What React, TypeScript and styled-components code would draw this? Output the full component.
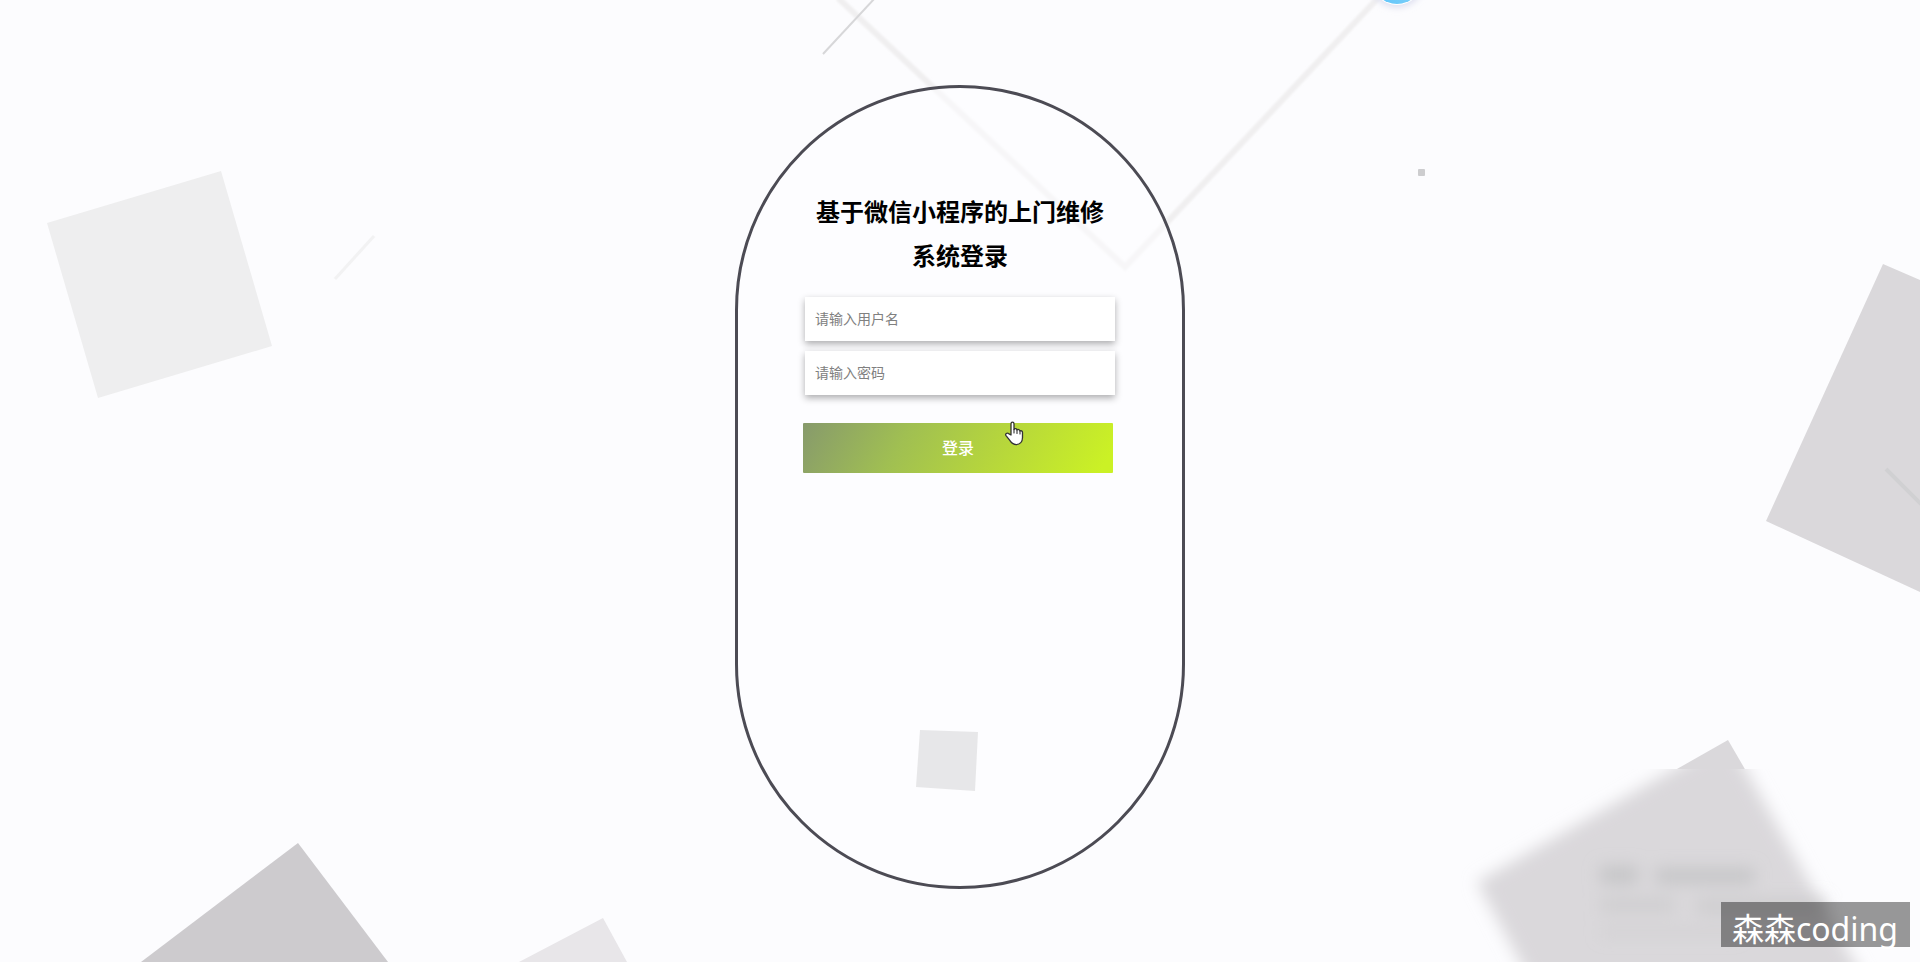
import React, { useState } from "react";
import styled, { createGlobalStyle } from "styled-components";

const GlobalStyle = createGlobalStyle`
  *, *::before, *::after { box-sizing: border-box; }
  body {
    margin: 0;
    background: #fcfcfe;
    color: #000;
    font-family: "Noto Sans CJK SC", sans-serif;
  }
`;

const Page = styled.div`
  position: relative;
  display: flex;
  justify-content: center;
  align-items: flex-start;
  min-height: 100vh;
  padding: 85px 20px 73px;
  overflow: hidden;
`;

const Backdrop = styled.svg`
  position: absolute;
  inset: 0;
  width: 100%;
  height: 100%;
`;

const Card = styled.main`
  position: relative;
  display: flex;
  flex-direction: column;
  align-items: center;
  width: 100%;
  max-width: 450px;
  min-height: 804px;
  padding: 101px 20px 40px;
  border: 3px solid #4c4b54;
  border-radius: 225px;
  background: rgba(253, 253, 255, 0.5);
`;

const Title = styled.h1`
  width: 100%;
  max-width: 300px;
  margin: 0 0 20px;
  font-size: 24px;
  font-weight: 700;
  line-height: 44px;
  text-align: center;
`;

const Form = styled.form`
  display: flex;
  flex-direction: column;
  width: 100%;
  max-width: 314px;
`;

const Fields = styled.div`
  display: flex;
  flex-direction: column;
  gap: 10px;
  padding: 0 2px 28px;
`;

const Field = styled.input`
  width: 100%;
  height: 44px;
  padding: 0 10px 2px;
  border: 0;
  border-radius: 0;
  outline: 0;
  background: #fff;
  box-shadow: 0 3px 7px rgba(0, 0, 0, 0.32);
  color: #333;
  font-family: inherit;
  font-size: 14px;

  &::placeholder {
    color: #808080;
    opacity: 1;
  }
`;

const SubmitArea = styled.div`
  position: relative;
  padding-right: 4px;
`;

const SubmitButton = styled.button`
  display: block;
  width: 100%;
  height: 50px;
  padding: 0 0 3px;
  border: 0;
  border-radius: 1px;
  background: linear-gradient(120deg, #879a6c 0%, #a0bf52 32%, #b6d63c 62%, #cbf125 96%);
  color: #fff;
  font-family: inherit;
  font-size: 16px;
  font-weight: 500;
  cursor: pointer;
`;

const Pointer = styled.svg`
  position: absolute;
  top: -2px;
  left: 201px;
  width: 20px;
  height: 25px;
  pointer-events: none;
`;

const Watermark = styled.div`
  position: absolute;
  right: 10px;
  bottom: 15px;
  height: 45px;
  padding: 0 12px 0 11px;
  background: rgba(0, 0, 0, 0.4);
  color: #fff;
  font-family: "Noto Sans", "Noto Sans CJK SC", sans-serif;
  font-size: 32px;
  line-height: 54px;
  white-space: nowrap;
`;

function Shapes() {
  return (
    <Backdrop viewBox="0 0 1920 962" preserveAspectRatio="xMidYMid slice" aria-hidden="true">
      <defs>
        <clipPath id="sharpArea">
          <rect x="1400" y="700" width="520" height="69" />
        </clipPath>
        <clipPath id="softArea">
          <rect x="1440" y="769" width="480" height="193" />
        </clipPath>
        <filter id="soft" x="-20%" y="-20%" width="140%" height="140%">
          <feGaussianBlur stdDeviation="8" />
        </filter>
        <filter id="smudge" x="-20%" y="-100%" width="140%" height="300%">
          <feGaussianBlur stdDeviation="8" />
        </filter>
        <filter id="edge" x="-5%" y="-5%" width="110%" height="110%">
          <feGaussianBlur stdDeviation="1" />
        </filter>
        <filter id="halo" x="-20%" y="-20%" width="140%" height="140%">
          <feGaussianBlur stdDeviation="3" />
        </filter>
        <linearGradient id="orb" x1="0" x2="1">
          <stop offset="0" stopColor="#5cc4fb" />
          <stop offset="1" stopColor="#7fd0f8" />
        </linearGradient>
      </defs>
      <path d="M838 -2 L1125 267 L1378 -2" fill="none" stroke="#f0eff0" strokeWidth="6" filter="url(#edge)" />
      <path d="M823 54 L875 -2" stroke="#d7d7d9" strokeWidth="2" />
      <path d="M335 279 L374 236" stroke="#f2f2f3" strokeWidth="3" />
      <rect x="1418" y="169" width="7" height="7" rx="1" fill="#cdcdcf" />
      <circle cx="1397" cy="-20" r="28" fill="#dfe0f0" filter="url(#halo)" />
      <circle cx="1397" cy="-21" r="26" fill="#fff" />
      <circle cx="1397" cy="-21" r="25" fill="url(#orb)" />
      <path d="M47 223 L221 171 L272 346 L98 398 Z" fill="#eeeeef" />
      <path d="M1883 264 L1920 280 V592 L1766 521 Z" fill="#dad8db" />
      <path d="M1886 469 L1922 505" stroke="#d0d0d2" strokeWidth="4" />
      <path d="M141 962 L298 843 L388 962 Z" fill="#cdcbce" />
      <path d="M519 962 L603 918 L627 962 Z" fill="#e8e6e9" />
      <path d="M920 730 L978 732 L975 791 L916 787 Z" fill="#d1d1d2" />
      <g clipPath="url(#sharpArea)">
        <path d="M1728 740 L1478 882 L1580 1070 L1920 1070 Z" fill="#dad8db" />
      </g>
      <g clipPath="url(#softArea)">
        <path d="M1728 738 L1477 882 L1578 1070 L1915 1070 Z" fill="#dad8db" filter="url(#soft)" />
        <g fill="#c6c6c8" filter="url(#smudge)">
          <rect x="1600" y="866" width="38" height="18" />
          <rect x="1656" y="868" width="98" height="16" />
          <rect x="1600" y="898" width="75" height="14" opacity="0.6" />
          <rect x="1696" y="898" width="130" height="16" opacity="0.6" />
          <rect x="1600" y="926" width="140" height="12" opacity="0.3" />
        </g>
      </g>
    </Backdrop>
  );
}

function HandPointer() {
  return (
    <Pointer viewBox="0 0 20 25" aria-hidden="true">
      <path
        d="M7 14 V3 C7 0.6 10 0.6 10 3 V8.5 C10.4 7.2 12.8 7.4 13 9 C13.6 8 15.8 8.4 16 10 C16.8 9.2 18.5 9.8 18.5 11.4 V16.5 C18.5 20.8 16 23.6 12.2 23.6 C8.6 23.6 7.2 21.8 5.6 19.2 L2 14.6 C0.8 12.8 3.2 11.4 4.6 12.6 Z"
        fill="#fff"
        stroke="#333"
        strokeWidth="1.3"
        strokeLinejoin="round"
      />
      <path d="M10 8.5 V12 M13 9 V12.5 M16 10 V13" stroke="#333" strokeWidth="1.1" strokeLinecap="round" />
    </Pointer>
  );
}

export default function App() {
  const [username, setUsername] = useState("");
  const [password, setPassword] = useState("");

  return (
    <>
      <GlobalStyle />
      <Page>
        <Shapes />
        <Card>
          <Title>基于微信小程序的上门维修系统登录</Title>
          <Form onSubmit={(event) => event.preventDefault()}>
            <Fields>
              <Field
                type="text"
                aria-label="请输入用户名"
                placeholder="请输入用户名"
                value={username}
                onChange={(event) => setUsername(event.target.value)}
              />
              <Field
                type="password"
                aria-label="请输入密码"
                placeholder="请输入密码"
                value={password}
                onChange={(event) => setPassword(event.target.value)}
              />
            </Fields>
            <SubmitArea>
              <SubmitButton type="submit">登录</SubmitButton>
              <HandPointer />
            </SubmitArea>
          </Form>
        </Card>
        <Watermark>森森coding</Watermark>
      </Page>
    </>
  );
}
